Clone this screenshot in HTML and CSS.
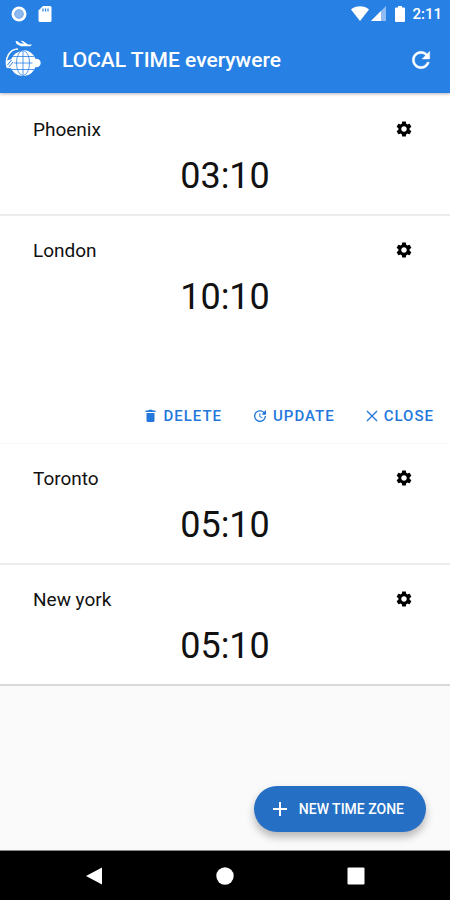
FILE: index.html
```html
<!DOCTYPE html>
<html lang="en">
<head>
<meta charset="utf-8">
<meta name="viewport" content="width=device-width, initial-scale=1">
<title>LOCAL TIME everywere</title>
<link rel="stylesheet" href="styles.css">
</head>
<body>
<svg class="sprite">
  <symbol id="gear" viewBox="0 0 24 24"><path fill-rule="evenodd" d="M19.43 12.98c.04-.32.07-.64.07-.98s-.03-.66-.07-.98l2.11-1.65c.19-.15.24-.42.12-.64l-2-3.46c-.12-.22-.39-.3-.61-.22l-2.49 1c-.52-.4-1.08-.73-1.69-.98l-.38-2.65C14.46 2.18 14.25 2 14 2h-4c-.25 0-.46.18-.49.42l-.38 2.65c-.61.25-1.17.59-1.69.98l-2.49-1c-.23-.09-.49 0-.61.22l-2 3.46c-.13.22-.07.49.12.64l2.11 1.65c-.04.32-.07.65-.07.98s.03.66.07.98l-2.11 1.65c-.19.15-.24.42-.12.64l2 3.46c.12.22.39.3.61.22l2.49-1c.52.4 1.08.73 1.69.98l.38 2.65c.03.24.24.42.49.42h4c.25 0 .46-.18.49-.42l.38-2.65c.61-.25 1.17-.59 1.69-.98l2.49 1c.23.09.49 0 .61-.22l2-3.46c.12-.22.07-.49-.12-.64zM12 15.700c-2 0-3.700-1.700-3.700-3.700s1.700-3.700 3.700-3.700 3.700 1.700 3.700 3.700-1.700 3.700-3.700 3.700z"/></symbol>
</svg>
<div class="screen">
  <header class="top">
    <div class="status">
      <svg width="16" height="16" viewBox="0 0 16 16"><circle cx="8" cy="8" r="7.500" fill="#fff"/><circle cx="8" cy="8" r="4.300" fill="#8db9f1" stroke="#6ea6ed"/></svg>
      <svg class="sd" width="14" height="16" viewBox="0 0 14 16"><path fill="#fff" d="M5 0h7a1.500 1.500 0 0 1 1.500 1.500v13A1.500 1.500 0 0 1 12 16H2a1.500 1.500 0 0 1-1.500-1.500V4.500z"/><path stroke="#2780e3" stroke-width="1.200" d="M5 2.500v3M7.500 2.500v3M10 2.500v3"/></svg>
      <span class="spacer"></span>
      <svg width="18" height="15" viewBox="0 0 18 15"><path fill="#fff" d="M0 3.500C5-.8 13-.8 18 3.500L9 15z"/></svg>
      <svg class="signal" width="15" height="15" viewBox="0 0 15 15"><path fill="#8fbcf3" d="M15 0v15H0z"/><path fill="#fff" d="M10 5v10H0z"/></svg>
      <svg class="battery" width="10" height="16" viewBox="0 0 10 16"><path fill="#fff" d="M3 0h4v1.500h2a1 1 0 0 1 1 1V15a1 1 0 0 1-1 1H1a1 1 0 0 1-1-1V2.500a1 1 0 0 1 1-1h2z"/></svg>
      <time class="clock">2:11</time>
    </div>
    <div class="appbar">
      <svg class="logo" width="36" height="38" viewBox="0 0 36 38">
        <circle cx="18" cy="23" r="13" fill="#fff"/>
        <g fill="none" stroke="#2780e3" stroke-width=".8"><path d="M18 10.500v25M7 16.500h22M6 23h24M7 29.500h22"/><ellipse cx="18" cy="23" rx="6.500" ry="12.500"/></g>
        <circle cx="31.500" cy="23" r="4.200" fill="#fff"/>
        <path fill="none" stroke="#2780e3" stroke-width="1.500" d="M5.500 19C7.500 14 11 11 17 10.200"/>
        <path fill="none" stroke="#fff" stroke-width="1.500" d="M2.500 28C-1 18 5 9 13 9"/>
        <circle cx="5" cy="24" r="4.200" fill="#fff"/><path stroke="#2780e3" d="M2.500 25l4-5M4 27l4-5"/>
        <path fill="#fff" d="M10.500 1l2 .3 2.500 2 4 .4-3.500-3 2.500.2 5 3.500h4l-1.500 1.800H16L11.500 4z"/>
      </svg>
      <h1>LOCAL TIME everywere</h1>
      <button class="icon-button" aria-label="Refresh"><svg width="26" height="26" viewBox="0 0 24 24"><path fill="#fff" stroke="#fff" stroke-width=".4" d="M17.650 6.350C16.200 4.900 14.210 4 12 4c-4.420 0-7.990 3.580-7.990 8s3.570 8 7.990 8c3.730 0 6.840-2.550 7.730-6h-2.080c-.82 2.330-3.040 4-5.650 4-3.310 0-6-2.690-6-6s2.690-6 6-6c1.660 0 3.140.69 4.220 1.780L13 11h7V4z"/></svg></button>
    </div>
  </header>
  <main>
    <section class="card">
      <div class="row"><h2>Phoenix</h2><button class="icon-button" aria-label="Phoenix settings"><svg width="18" height="18"><use href="#gear"/></svg></button></div>
      <time class="time">03:10</time>
    </section>
    <section class="card open">
      <div class="row"><h2>London</h2><button class="icon-button" aria-label="London settings"><svg width="18" height="18"><use href="#gear"/></svg></button></div>
      <time class="time">10:10</time>
    </section>
    <div class="actions">
      <button><svg width="15" height="16" viewBox="0 0 15 16"><path fill="currentColor" d="M3.500 5h8v7.500a1.500 1.500 0 0 1-1.500 1.500H5a1.500 1.500 0 0 1-1.500-1.500zM2.500 2.500h2.500l1-.8h3l1 .8h2.500V4h-10z"/></svg>DELETE</button>
      <button><svg width="16" height="16" viewBox="0 0 24 24"><path fill="currentColor" d="M21 10.120h-6.780l2.740-2.820c-2.730-2.700-7.150-2.800-9.880-.1-2.730 2.710-2.730 7.080 0 9.790s7.150 2.710 9.880 0C18.320 15.650 19 14.080 19 12.100h2c0 1.980-.88 4.550-2.640 6.290-3.510 3.480-9.210 3.480-12.720 0-3.500-3.470-3.530-9.110-.02-12.580s9.140-3.470 12.650 0L21 3zM12.500 8v4.250l3.500 2.080-.72 1.210L11 13V8z"/></svg>UPDATE</button>
      <button><svg width="14" height="16" viewBox="0 0 14 16"><path fill="none" stroke="currentColor" stroke-width="1.400" d="M2 3l10 10M12 3L2 13"/></svg>CLOSE</button>
    </div>
    <section class="card">
      <div class="row"><h2>Toronto</h2><button class="icon-button" aria-label="Toronto settings"><svg width="18" height="18"><use href="#gear"/></svg></button></div>
      <time class="time">05:10</time>
    </section>
    <section class="card last">
      <div class="row"><h2>New york</h2><button class="icon-button" aria-label="New york settings"><svg width="18" height="18"><use href="#gear"/></svg></button></div>
      <time class="time">05:10</time>
    </section>
  </main>
  <button class="fab"><svg width="16" height="16" viewBox="0 0 16 16"><path stroke="#fff" stroke-width="2" d="M8 1v14M1 8h14"/></svg>NEW TIME ZONE</button>
  <nav class="navbar">
    <button class="icon-button" aria-label="Back"><svg width="18" height="18" viewBox="0 0 18 18"><path fill="#fff" d="M1 9L17 .5v17z"/></svg></button>
    <button class="icon-button" aria-label="Home"><svg width="18" height="18" viewBox="0 0 18 18"><circle cx="9" cy="9" r="8.700" fill="#fff"/></svg></button>
    <button class="icon-button" aria-label="Recent apps"><svg width="18" height="18" viewBox="0 0 18 18"><rect x=".5" y=".5" width="17" height="17" rx="1" fill="#fff"/></svg></button>
  </nav>
</div>
</body>
</html>
```
FILE: styles.css
```css
* { box-sizing: border-box; }

body {
  margin: 0;
  font-family: Roboto, "Liberation Sans", sans-serif;
  background: #fafafa;
  color: #111;
}

h1, h2 { margin: 0; }

svg { display: block; flex: none; }

.sprite { display: none; }

button {
  border: 0;
  padding: 0;
  background: none;
  font: inherit;
  color: inherit;
  cursor: pointer;
}

.screen {
  display: flex;
  flex-direction: column;
  min-height: 100vh;
}

.top {
  position: relative;
  background: #2780e3;
  color: #fff;
  box-shadow: 0 1px 3px rgba(0, 0, 0, 0.3);
}

.status {
  display: flex;
  align-items: center;
  height: 27px;
  padding: 0 8px 0 11px;
}

.sd { margin-left: 11px; }
.spacer { flex: 1; }
.signal { margin-left: 2px; }
.battery { margin: 0 7px 0 9px; }

.clock {
  font-size: 15px;
  font-weight: 500;
}

.appbar {
  display: flex;
  align-items: center;
  height: 66px;
  padding: 0 16px 0 5px;
}

.logo { margin-bottom: 2px; }

h1 {
  flex: 1;
  margin-left: 21px;
  font-size: 21px;
  font-weight: 500;
}

main {
  padding-top: 2px;
  background: #fff;
}

.card {
  height: 121px;
  padding-top: 22px;
  border-bottom: 2px solid #ececec;
}

.card.open { border-bottom-color: #fff; }
.card.last { border-bottom-color: #d9d9d9; }

.row {
  display: flex;
  align-items: center;
  justify-content: space-between;
  height: 24px;
  padding: 0 37px 0 33px;
}

.row svg { fill: #000; }

h2 {
  font-size: 19px;
  font-weight: 400;
}

.time {
  display: block;
  margin-top: 10px;
  font-size: 36px;
  line-height: 50px;
  text-align: center;
}

.actions {
  display: flex;
  align-items: flex-end;
  justify-content: flex-end;
  gap: 30px;
  height: 107px;
  padding: 0 16px 18px;
  border-bottom: 1px solid #f9f9f9;
}

.actions button {
  display: flex;
  align-items: center;
  gap: 5px;
  color: #2478dc;
  font-size: 15px;
  line-height: 18px;
  font-weight: 500;
  letter-spacing: 1px;
}

.fab {
  display: flex;
  align-items: center;
  align-self: flex-end;
  gap: 11px;
  height: 46px;
  margin: auto 24px 18px;
  padding: 0 22px 0 18px;
  border-radius: 23px;
  background: #256fc4;
  color: #fff;
  font-size: 14px;
  font-weight: 500;
  box-shadow: 0 5px 8px rgba(0, 0, 0, 0.28);
}

.navbar {
  display: flex;
  align-items: center;
  justify-content: center;
  gap: 113px;
  height: 50px;
  background: #000;
  border-top: 1px solid #888;
}
```
